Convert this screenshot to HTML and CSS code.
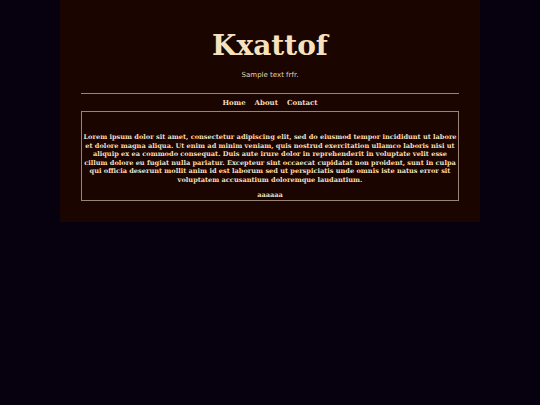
FILE: index.html
```html
<!DOCTYPE html>
<html>
<head>
<meta charset="utf-8">
<link rel="stylesheet" href="styles.css">
</head>
<body>
<div class="page">
  <header class="header">
    <h1 class="title">Kxattof</h1>
    <p class="subtitle">Sample text frfr.</p>
  </header>
  <hr class="rule">
  <nav class="nav">
    <a href="#">Home</a>
    <a href="#">About</a>
    <a href="#">Contact</a>
  </nav>
  <main class="content">
    <p class="lorem">Lorem ipsum dolor sit amet, consectetur adipiscing elit, sed do eiusmod tempor incididunt ut labore et dolore magna aliqua. Ut enim ad minim veniam, quis nostrud exercitation ullamco laboris nisi ut aliquip ex ea commodo consequat. Duis aute irure dolor in reprehenderit in voluptate velit esse cillum dolore eu fugiat nulla pariatur. Excepteur sint occaecat cupidatat non proident, sunt in culpa qui officia deserunt mollit anim id est laborum sed ut perspiciatis unde omnis iste natus error sit voluptatem accusantium doloremque laudantium.</p>
    <p class="tail">aaaaaa</p>
  </main>
</div>
</body>
</html>
```
FILE: styles.css
```css
html, body {
  margin: 0;
  padding: 0;
  background: #07000f;
}
body {
  font-family: "DejaVu Serif", serif;
  color: #f5dfbb;
}
.page {
  width: 420px;
  margin: 0 auto;
  background: #1a0500;
  padding: 30px 21px 21px;
  box-sizing: border-box;
}
.header {
  text-align: center;
}
.title {
  margin: 0;
  font-family: "DejaVu Serif", serif;
  font-size: 28px;
  line-height: 32px;
  font-weight: bold;
  color: #f8e2bd;
}
.subtitle {
  margin: 9px 0 0;
  font-family: "DejaVu Sans", sans-serif;
  font-size: 7px;
  color: #e6d2b2;
}
.rule {
  margin: 14px 0 0;
  border: 0;
  border-top: 1px solid #9a8478;
  height: 0;
}
.nav {
  display: flex;
  justify-content: center;
  gap: 9px;
  margin-top: 4px;
  font-size: 7px;
  font-weight: bold;
  line-height: 10px;
}
.nav a {
  color: #f2dcb8;
  text-decoration: none;
}
.content {
  margin-top: 3px;
  border: 1px solid #9a8478;
  padding: 21px 0 0;
  text-align: center;
  font-weight: bold;
  font-size: 6.6px;
  line-height: 8.5px;
}
.lorem {
  margin: 0;
}
.tail {
  margin: 7px 0 0;
}
```
